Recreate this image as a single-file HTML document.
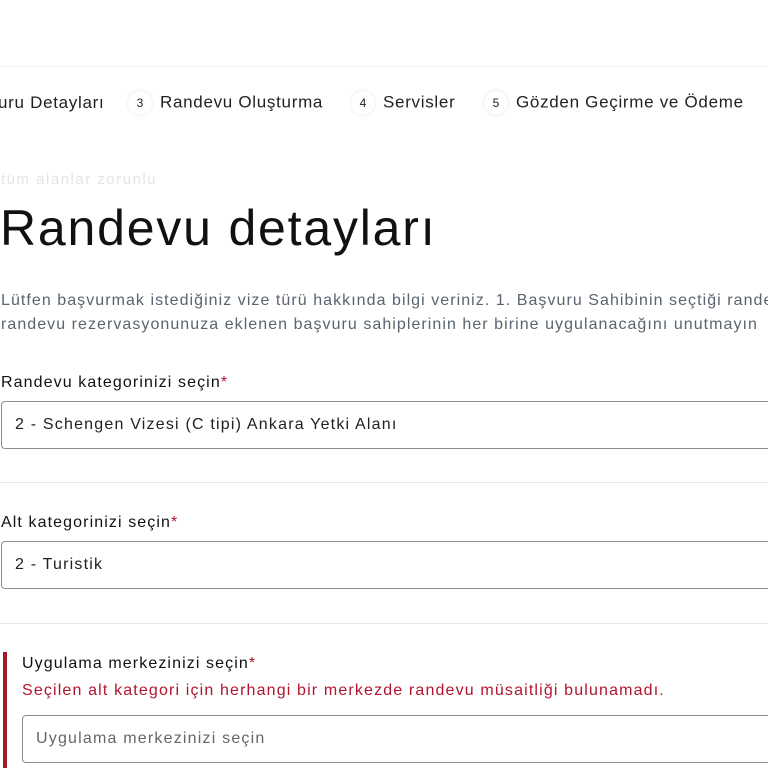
<!DOCTYPE html>
<html><head><meta charset="utf-8"><style>
body{margin:0;width:768px;height:768px;overflow:hidden;background:#fff;font-family:"Liberation Sans",sans-serif;color:#111;position:relative}
.a{position:absolute;white-space:nowrap}
.c{display:inline-block;width:24px;height:24px;border-radius:50%;box-shadow:0 0 3px rgba(0,0,0,.12);text-align:center;line-height:24px;font-size:12px;vertical-align:middle;margin-right:8px;letter-spacing:0}
.nav{font-size:17px;top:92px;color:#222;letter-spacing:0.7px}
.lbl{font-size:16px;color:#111;letter-spacing:1.1px}
.lbl b{color:#b0152e;font-weight:normal}
.in{position:absolute;left:1px;width:800px;height:48px;border:1px solid #8c8c8c;border-radius:4px;box-sizing:border-box;font-size:16px;line-height:46px;padding-left:13px;color:#222;letter-spacing:1.2px}
.hr{position:absolute;left:0;width:768px;height:1px;background:#e6e6e6}
</style></head><body>
<div class="hr" style="top:66px;background:#f0f0f0"></div>
<div class="a nav" style="left:-2px;top:93px">uru Detayları</div>
<div class="a nav" style="left:128px;top:91px"><span class="c">3</span>Randevu Oluşturma</div>
<div class="a nav" style="left:351px;top:91px"><span class="c">4</span>Servisler</div>
<div class="a nav" style="left:484px;top:91px"><span class="c">5</span>Gözden Geçirme ve Ödeme</div>
<div class="a" style="left:1px;top:171px;font-size:15px;color:#e4e4e4;letter-spacing:1.5px">tüm alanlar zorunlu</div>
<div class="a" style="left:0;top:199px;font-size:50px;color:#111;letter-spacing:1.8px">Randevu detayları</div>
<div class="a" style="left:1px;top:289px;font-size:16px;color:#5a6470;line-height:24px;letter-spacing:1.05px">Lütfen başvurmak istediğiniz vize türü hakkında bilgi veriniz. 1. Başvuru Sahibinin seçtiği randevu<br>randevu rezervasyonunuza eklenen başvuru sahiplerinin her birine uygulanacağını unutmayın</div>
<div class="a lbl" style="left:1px;top:374px">Randevu kategorinizi seçin<b>*</b></div>
<div class="in" style="top:401px">2 - Schengen Vizesi (C tipi) Ankara Yetki Alanı</div>
<div class="hr" style="top:482px"></div>
<div class="a lbl" style="left:1px;top:514px">Alt kategorinizi seçin<b>*</b></div>
<div class="in" style="top:541px">2 - Turistik</div>
<div class="hr" style="top:623px"></div>
<div style="position:absolute;left:3px;top:652px;width:4px;height:116px;background:#a8162e"></div>
<div class="a lbl" style="left:22px;top:655px">Uygulama merkezinizi seçin<b>*</b></div>
<div class="a" style="left:22px;top:682px;font-size:16px;color:#b0152e;letter-spacing:1.15px">Seçilen alt kategori için herhangi bir merkezde randevu müsaitliği bulunamadı.</div>
<div class="in" style="top:715px;left:22px;color:#666">Uygulama merkezinizi seçin</div>
</body></html>
